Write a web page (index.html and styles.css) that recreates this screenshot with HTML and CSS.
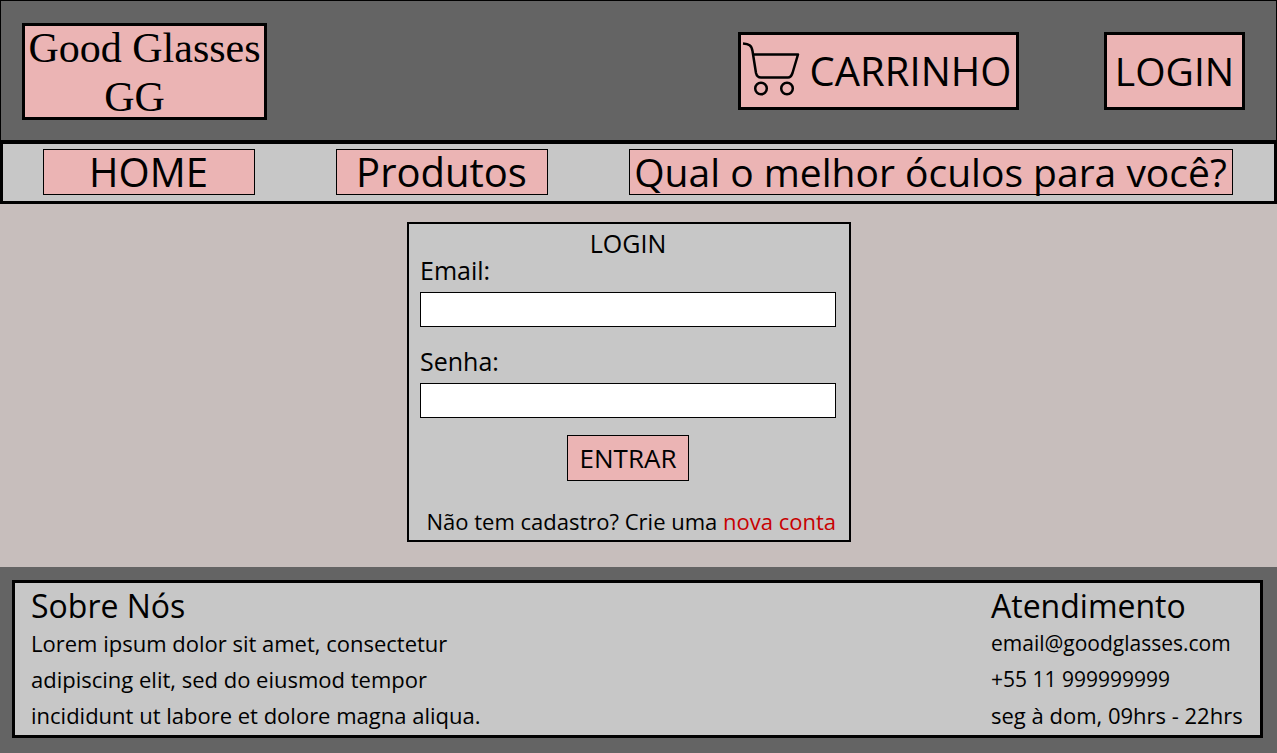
FILE: index.html
```html
<!DOCTYPE html>
<html lang="pt-BR">
<head>
<meta charset="utf-8">
<meta name="viewport" content="width=device-width, initial-scale=1">
<title>Good Glasses - Login</title>
<link rel="stylesheet" href="styles.css">
</head>
<body>
<header class="header">
  <a class="logo" href="#"><span>Good Glasses</span><span class="initials">GG</span></a>
  <div class="actions">
    <button class="action cart" type="button">
      <svg class="cart-icon" viewBox="0 0 58 56" aria-hidden="true">
        <path d="M1 2.500C7 3 9.500 4 10.500 10L14 32Q15 36.500 19 36.500H46Q49 36.500 50.500 32L56 13.500H11"/>
        <circle cx="19" cy="47.500" r="5.800"/>
        <circle cx="45" cy="47.500" r="5.800"/>
      </svg>
      <span>CARRINHO</span>
    </button>
    <button class="action login" type="button">LOGIN</button>
  </div>
</header>
<nav class="nav">
  <a class="nav-link" href="#">HOME</a>
  <a class="nav-link" href="#">Produtos</a>
  <a class="nav-link wide" href="#">Qual o melhor óculos para você?</a>
</nav>
<main class="main">
  <form class="card">
    <h1 class="title">LOGIN</h1>
    <label class="label" for="email">Email:</label>
    <input class="field" id="email" type="email">
    <label class="label" for="senha">Senha:</label>
    <input class="field" id="senha" type="password">
    <button class="submit" type="submit">ENTRAR</button>
    <p class="signup">Não tem cadastro? Crie uma <a class="new-account" href="#">nova conta</a></p>
  </form>
</main>
<footer class="footer">
  <div class="footer-box">
    <section class="about">
      <h2 class="heading">Sobre Nós</h2>
      <p class="line">Lorem ipsum dolor sit amet, consectetur<br>adipiscing elit, sed do eiusmod tempor<br>incididunt ut labore et dolore magna aliqua.</p>
    </section>
    <section class="contact">
      <h2 class="heading">Atendimento</h2>
      <p class="line compact">email@goodglasses.com</p>
      <p class="line compact">+55 11 999999999</p>
      <p class="line">seg à dom, 09hrs - 22hrs</p>
    </section>
  </div>
</footer>
</body>
</html>
```
FILE: styles.css
```css
* { box-sizing: border-box; }
body {
  margin: 0;
  min-height: 100vh;
  display: flex;
  flex-direction: column;
  background: #646464;
  color: #000;
  font-family: "Open Sans", "Noto Sans", sans-serif;
  font-weight: 500;
}
h1, h2, p { margin: 0; font-weight: 500; }
a { color: inherit; text-decoration: none; }
button { font: inherit; color: inherit; padding: 0; cursor: pointer; }
.header {
  display: flex;
  justify-content: space-between;
  align-items: flex-start;
  padding: 22px 31px 20px 21px;
  border: 1px solid #000;
  border-bottom: 0;
  background: #646464;
}
.logo {
  display: flex;
  flex-direction: column;
  gap: 4px;
  width: 245px;
  height: 97px;
  padding: 0 2px;
  border: 3px solid #000;
  background: #ebb4b4;
  font-family: "Liberation Serif", serif;
  font-weight: 400;
  font-size: 42px;
  line-height: 45px;
  text-align: center;
  white-space: nowrap;
}
.initials { padding-right: 20px; }
.actions { display: flex; gap: 85px; padding-top: 9px; }
.action {
  display: flex;
  align-items: center;
  justify-content: center;
  height: 78px;
  border: 3px solid #000;
  background: #ebb4b4;
  font-size: 40px;
  line-height: 54px;
}
.cart { width: 281px; gap: 10px; padding: 0 4px 4px 0; }
.cart span { padding-top: 4px; }
.login { width: 141px; font-size: 39px; }
.cart-icon {
  width: 58px;
  height: 56px;
  flex: none;
  fill: none;
  stroke: #000;
  stroke-width: 2.5;
  stroke-linejoin: round;
}
.nav {
  display: flex;
  justify-content: center;
  gap: 81px;
  padding: 5px 2px 6px 0;
  border: 3px solid #000;
  border-top-width: 4px;
  background: #c7c7c7;
}
.nav-link {
  width: 212px;
  height: 46px;
  border: 1px solid #000;
  background: #ebb4b4;
  font-size: 40px;
  line-height: 44px;
  text-align: center;
  white-space: nowrap;
}
.wide { width: 604px; font-size: 39px; }
.main {
  flex: 1;
  display: flex;
  justify-content: center;
  align-items: flex-start;
  padding: 18px 19px 25px 0;
  background: #c7bebc;
}
.card {
  display: flex;
  flex-direction: column;
  width: 444px;
  padding: 6px 13px 4px 11px;
  border: 2px solid #000;
  background: #c7c7c7;
}
.title { font-size: 25px; line-height: 26px; text-align: center; }
.label { font-size: 25px; line-height: 28px; }
.field {
  width: 100%;
  height: 35px;
  margin: 8px 0 20px;
  padding: 0 8px;
  border: 1px solid #000;
  border-radius: 0;
  background: #fff;
  font: inherit;
  font-size: 22px;
}
.submit {
  align-self: center;
  width: 122px;
  height: 46px;
  margin: -3px 0 25px;
  border: 1px solid #000;
  background: #ebb4b4;
  font-size: 26px;
  line-height: 36px;
}
.signup { font-size: 22px; line-height: 30px; text-align: right; white-space: nowrap; }
.new-account { color: #c80000; }
.footer { padding: 13px 14px 15px 12px; background: #646464; }
.footer-box {
  display: flex;
  justify-content: space-between;
  padding: 4px 10px 2px 16px;
  border: 3px solid #000;
  background: #c7c7c7;
}
.contact { width: 259px; white-space: nowrap; }
.heading { font-size: 32px; line-height: 38px; }
.line { font-size: 22px; line-height: 36px; }
.compact { font-size: 21px; }
```
